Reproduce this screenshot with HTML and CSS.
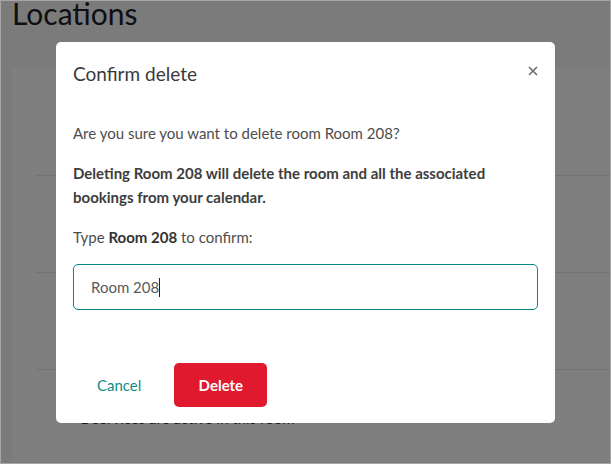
FILE: index.html
```html
<!DOCTYPE html>
<html>
<head>
<meta charset="utf-8">
<link rel="stylesheet" href="styles.css">
</head>
<body>
<div class="frame">
  <div class="page">
    <h1 class="page-title">Locations</h1>
    <div class="card">
      <div class="row"></div>
      <div class="row"></div>
      <div class="row"></div>
      <div class="row last"><span class="row-note">1 services are active in this room</span></div>
    </div>
  </div>
  <div class="overlay">
    <div class="modal" role="dialog">
      <div class="modal-header">
        <h2 class="modal-title">Confirm delete</h2>
        <button class="close" aria-label="Close">
          <svg width="10" height="10" viewBox="0 0 10 10"><path d="M1 1L9 9M9 1L1 9" stroke="#6b6b6b" stroke-width="1.6" fill="none"/></svg>
        </button>
      </div>
      <div class="modal-body">
        <p class="q">Are you sure you want to delete room Room 208?</p>
        <p class="warn">Deleting Room 208 will delete the room and all the associated bookings from your calendar.</p>
        <p class="type">Type <b>Room 208</b> to confirm:</p>
        <div class="input"><span>Room 208</span><span class="caret"></span></div>
      </div>
      <div class="modal-footer">
        <button class="btn cancel">Cancel</button>
        <button class="btn delete">Delete</button>
      </div>
    </div>
  </div>
</div>
</body>
</html>
```
FILE: styles.css
```css
* { box-sizing: border-box; }
html, body { margin: 0; padding: 0; }
body { font-family: Lato, "Noto Sans", sans-serif; }
.frame {
  position: relative;
  width: 611px;
  height: 464px;
  border: 1px solid #a6a6a6;
  overflow: hidden;
  background: #f6f6f6;
}
.page { padding: 0 0 0 11px; }
.page-title {
  margin: -6px 0 0;
  font-size: 30px;
  line-height: 36px;
  font-weight: 400;
  color: #1c1c26;
}
.card {
  margin-top: 37px;
  background: #fff;
  padding-left: 24px;
  height: 420px;
}
.row {
  height: 97px;
  border-bottom: 1px solid #e6e6e6;
}
.row:first-child { height: 108px; }
.row.last { border-bottom: 0; padding: 38px 0 0 44px; }
.row-note { font-size: 15px; color: #333; }
.overlay {
  position: absolute;
  inset: 0;
  background: rgba(0,0,0,0.5);
}
.modal {
  position: absolute;
  left: 55px;
  top: 41px;
  width: 499px;
  height: 381px;
  background: #fff;
  border-radius: 5px;
  display: flex;
  flex-direction: column;
  padding: 0 17px 16px;
}
.modal-header {
  display: flex;
  justify-content: space-between;
  align-items: flex-start;
  padding-top: 20px;
}
.modal-title {
  margin: 0;
  font-size: 19px;
  line-height: 24px;
  font-weight: 400;
  color: #3a3a3a;
}
.close {
  border: 0;
  background: none;
  padding: 0;
  margin: 3px -1px 0 0;
  width: 12px;
  height: 12px;
  display: flex;
  align-items: center;
  justify-content: center;
}
.modal-body { padding-top: 35px; flex: 1; }
.modal-body p {
  margin: 0 0 16px;
  font-size: 15px;
  line-height: 24px;
  color: #4d4d4d;
}
.modal-body .warn { font-weight: 700; color: #3d3d3d; }
.modal-body .type { margin-bottom: 15px; }
.modal-body .type b { color: #333; }
.input {
  height: 46px;
  border: 1px solid #0a8580;
  border-radius: 5px;
  padding: 0 17px;
  display: flex;
  align-items: center;
  font-size: 15px;
  color: #5a5a5a;
}
.caret {
  display: inline-block;
  width: 1px;
  height: 19px;
  background: #222;
}
.modal-footer { display: flex; gap: 9px; }
.btn {
  height: 44px;
  border: 0;
  border-radius: 5px;
  font-family: inherit;
  font-size: 15px;
  padding: 0 24px;
  background: none;
}
.cancel { color: #128a84; }
.delete { background: #e0192f; color: #fff; font-weight: 700; min-width: 93px; }
```
